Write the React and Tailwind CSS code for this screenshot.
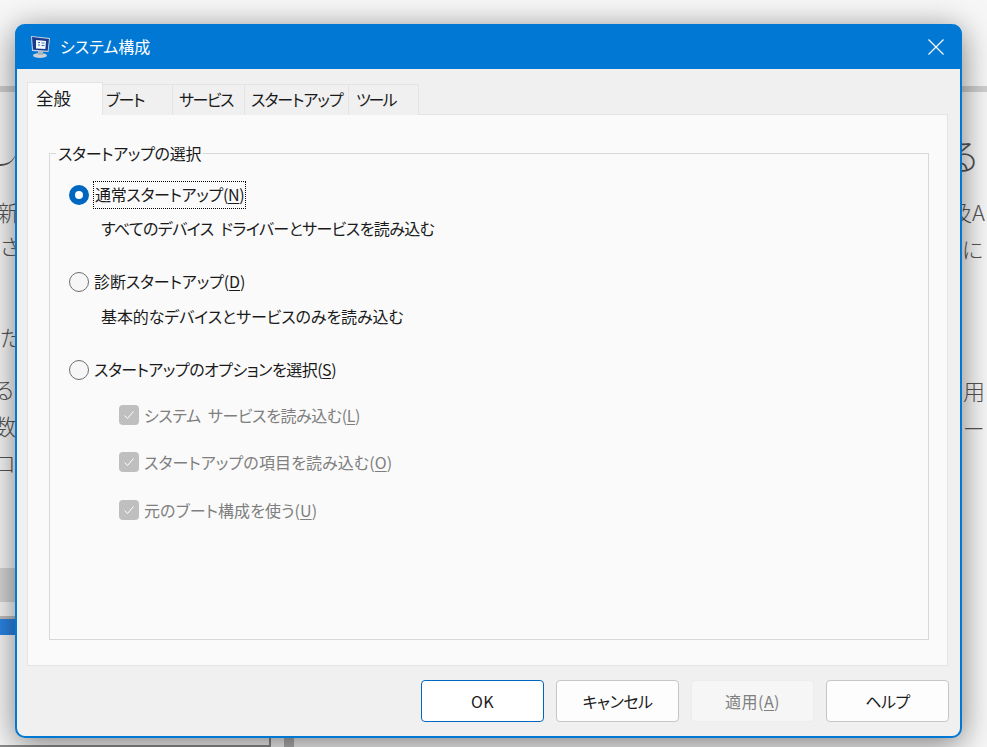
const font = "font-['Noto_Sans_CJK_JP','Noto_Sans',sans-serif] [font-feature-settings:'palt']"

function Key({ children }) {
  return <span className="underline underline-offset-2 decoration-1">{children}</span>
}

function Radio({ checked }) {
  if (checked) {
    return <span className="h-5 w-5 shrink-0 rounded-full border-[6px] border-[#0067c0] bg-white" />
  }
  return <span className="h-5 w-5 shrink-0 rounded-full border border-[#6e6e6e] bg-[#f6f6f6]" />
}

function Check({ className, children }) {
  return (
    <div className={`flex h-7 items-center gap-[5px] pl-[69px] text-[#7f7f7f] ${className}`}>
      <span className="flex h-5 w-5 shrink-0 items-center justify-center rounded-[4px] bg-[#bfbfbf]">
        <svg width="12" height="12" viewBox="0 0 12 12" fill="none" stroke="#fff" strokeWidth="1">
          <path d="M1.5 6.5 L4.5 9.5 L10.5 2.5" />
        </svg>
      </span>
      <span>{children}</span>
    </div>
  )
}

function Tab({ className, children }) {
  return (
    <div className={`flex h-[31px] items-center border border-b-0 border-l-0 border-[#e4e4e4] bg-[#f0f0f0] pb-[2px] ${className}`}>
      {children}
    </div>
  )
}

function Button({ className, children }) {
  return (
    <div className={`flex h-[42px] w-[123px] items-center justify-center rounded-[4px] border ${className}`}>
      {children}
    </div>
  )
}

function SystemIcon() {
  return (
    <svg width="22" height="24" viewBox="0 0 22 24">
      <ellipse cx="11" cy="20.5" rx="7" ry="2.5" fill="#c9d0d6" />
      <rect x="9" y="16" width="5" height="4" fill="#aab4bd" />
      <path d="M2 1 L21 3 L19.5 17 L3 16 Z" fill="#c8d3e0" />
      <path d="M3 2 L20 4 L18.7 15.8 L4 14.8 Z" fill="#1a3a8c" />
      <path d="M7 5 L17 6 L16.4 14 L7 13.4 Z" fill="#f4f7fb" />
      <path d="M9 7.5h2M9 10h2M12.5 8h3M12.5 10.5h3" stroke="#3a6fb5" strokeWidth="1" />
    </svg>
  )
}

// what shows of the window behind the dialog
function Backdrop() {
  return (
    <div className={`absolute inset-0 overflow-hidden bg-[#f7f7f7] text-[#555] text-[22px] font-light ${font}`}>
      <div className="absolute left-0 top-[86px] h-[6px] w-full bg-[#cfcfcf]" />
      <div className="absolute left-[-14px] top-[140px] h-[26px] w-[30px] rounded-b-full border-b-2 border-[#555]" />
      <span className="absolute left-[-3px] top-[195px] leading-[32px]">新</span>
      <span className="absolute left-0 top-[229px] leading-[32px]">さ</span>
      <span className="absolute left-0 top-[320px] leading-[32px]">た</span>
      <span className="absolute left-[-6px] top-[372px] leading-[32px]">る</span>
      <span className="absolute left-[-6px] top-[409px] leading-[32px]">数</span>
      <span className="absolute left-[-6px] top-[446px] leading-[32px]">ロマ</span>
      <span className="absolute left-[946px] top-[130px] text-[36px] leading-[48px]">る</span>
      <span className="absolute left-[950px] top-[195px] leading-[32px]">及A</span>
      <span className="absolute left-[962px] top-[232px] leading-[32px]">に</span>
      <span className="absolute left-[963px] top-[374px] leading-[32px]">用</span>
      <span className="absolute left-[963px] top-[411px] leading-[32px]">ー</span>
      <div className="absolute left-0 top-[568px] h-[34px] w-[20px] bg-[#d6d6d6]" />
      <div className="absolute left-0 top-[616px] h-[3px] w-[20px] bg-[#bdbdbd]" />
      <div className="absolute left-0 top-[619px] h-[16px] w-[20px] bg-[#2b84e4]" />
      <div className="absolute left-0 top-[730px] h-[17px] w-[271px] border-r-2 border-b-2 border-[#8c8c8c]" />
      <div className="absolute left-[284px] top-[730px] h-[17px] w-[10px] bg-[#b4b4b4]" />
    </div>
  )
}

export default function App() {
  return (
    <div className={`relative h-[747px] w-[987px] overflow-hidden pl-[15px] pt-[24px] text-[16px] text-[#1a1a1a] ${font}`}>
      <Backdrop />

      <div className="relative flex h-[714px] w-[947px] flex-col rounded-[10px] border-2 border-t-0 border-[#0078d4] bg-[#f0f0f0] shadow-[0_6px_32px_rgba(0,0,0,0.5)]">
        <div className="-mx-[2px] flex h-[45px] shrink-0 items-center rounded-t-[10px] bg-[#0078d4] pl-[14px] pr-[17px] text-white">
          <SystemIcon />
          <span className="ml-[9px] flex-1 pb-[2px]">システム構成</span>
          <svg width="18" height="18" viewBox="0 0 18 18" stroke="#fff" strokeWidth="1.2">
            <path d="M1.5 1.5 L16.5 16.5 M16.5 1.5 L1.5 16.5" />
          </svg>
        </div>

        <div className="flex flex-1 flex-col pl-[10px] pr-[12px] pt-[13px]">
          <div className="relative z-10 flex h-[33px] items-end">
            <div className="h-[33px] w-[76px] border border-b-0 border-[#e4e4e4] bg-[#fafafa] pl-[8px] pt-[2px] text-[17.5px]">
              全般
            </div>
            <Tab className="w-[70px] pl-[3px] tracking-[-1.3px]">ブート</Tab>
            <Tab className="w-[72px] pl-[6px] tracking-[-1.5px]">サービス</Tab>
            <Tab className="w-[104px] pl-[6px] tracking-[-1px]">スタートアップ</Tab>
            <Tab className="w-[70px] pl-[7px] tracking-[-2px]">ツール</Tab>
          </div>

          <div className="-mt-px h-[552px] border border-[#e4e4e4] bg-[#fafafa] pl-[21px] pr-[18px]">
            <fieldset className="mt-[26px] h-[499px] border border-[#d8d8d8]">
              <legend className="ml-[6px] px-[2px] leading-[24px] tracking-[-0.3px]">スタートアップの選択</legend>

              <div className="mt-[16px] flex h-7 items-center gap-[4px] pl-[19px]">
                <Radio checked />
                <span className="flex h-7 items-center border border-dotted border-black pb-[2px] pl-[1px] pr-[1px] tracking-[-0.3px]">
                  <span>通常スタートアップ(<Key>N</Key>)</span>
                </span>
              </div>
              <div className="mt-[5px] h-7 pl-[51px] leading-7 tracking-[-0.6px] [word-spacing:4px]">すべてのデバイス ドライバーとサービスを読み込む</div>

              <div className="mt-[26px] flex h-7 items-center gap-[5px] pl-[19px]">
                <Radio />
                <span className="pb-[2px] tracking-[-0.1px]">診断スタートアップ(<Key>D</Key>)</span>
              </div>
              <div className="mt-[6px] h-7 pl-[51px] leading-7 tracking-[-0.1px]">基本的なデバイスとサービスのみを読み込む</div>

              <div className="mt-[26px] flex h-7 items-center gap-[5px] pl-[19px]">
                <Radio />
                <span className="pb-[2px] tracking-[-0.5px]">スタートアップのオプションを選択(<Key>S</Key>)</span>
              </div>

              <Check className="mt-[17px] tracking-[-0.4px] [word-spacing:4px]">システム サービスを読み込む(<Key>L</Key>)</Check>
              <Check className="mt-[19px] tracking-[0.1px]">スタートアップの項目を読み込む(<Key>O</Key>)</Check>
              <Check className="mt-[20px] tracking-[0.1px]">元のブート構成を使う(<Key>U</Key>)</Check>
            </fieldset>
          </div>

          <div className="-mr-px mt-[14px] flex justify-end gap-[12px]">
            <Button className="border-[#0067c0] bg-white tracking-[0.5px]">OK</Button>
            <Button className="border-[#c6c6c6] bg-[#fdfdfd] tracking-[-0.5px]">キャンセル</Button>
            <Button className="border-[#ececec] bg-[#f6f6f6] text-[#808080] tracking-[0.5px]">
              <span>適用(<Key>A</Key>)</span>
            </Button>
            <Button className="border-[#c6c6c6] bg-[#fdfdfd] tracking-[-0.5px]">ヘルプ</Button>
          </div>
        </div>
      </div>
    </div>
  )
}
